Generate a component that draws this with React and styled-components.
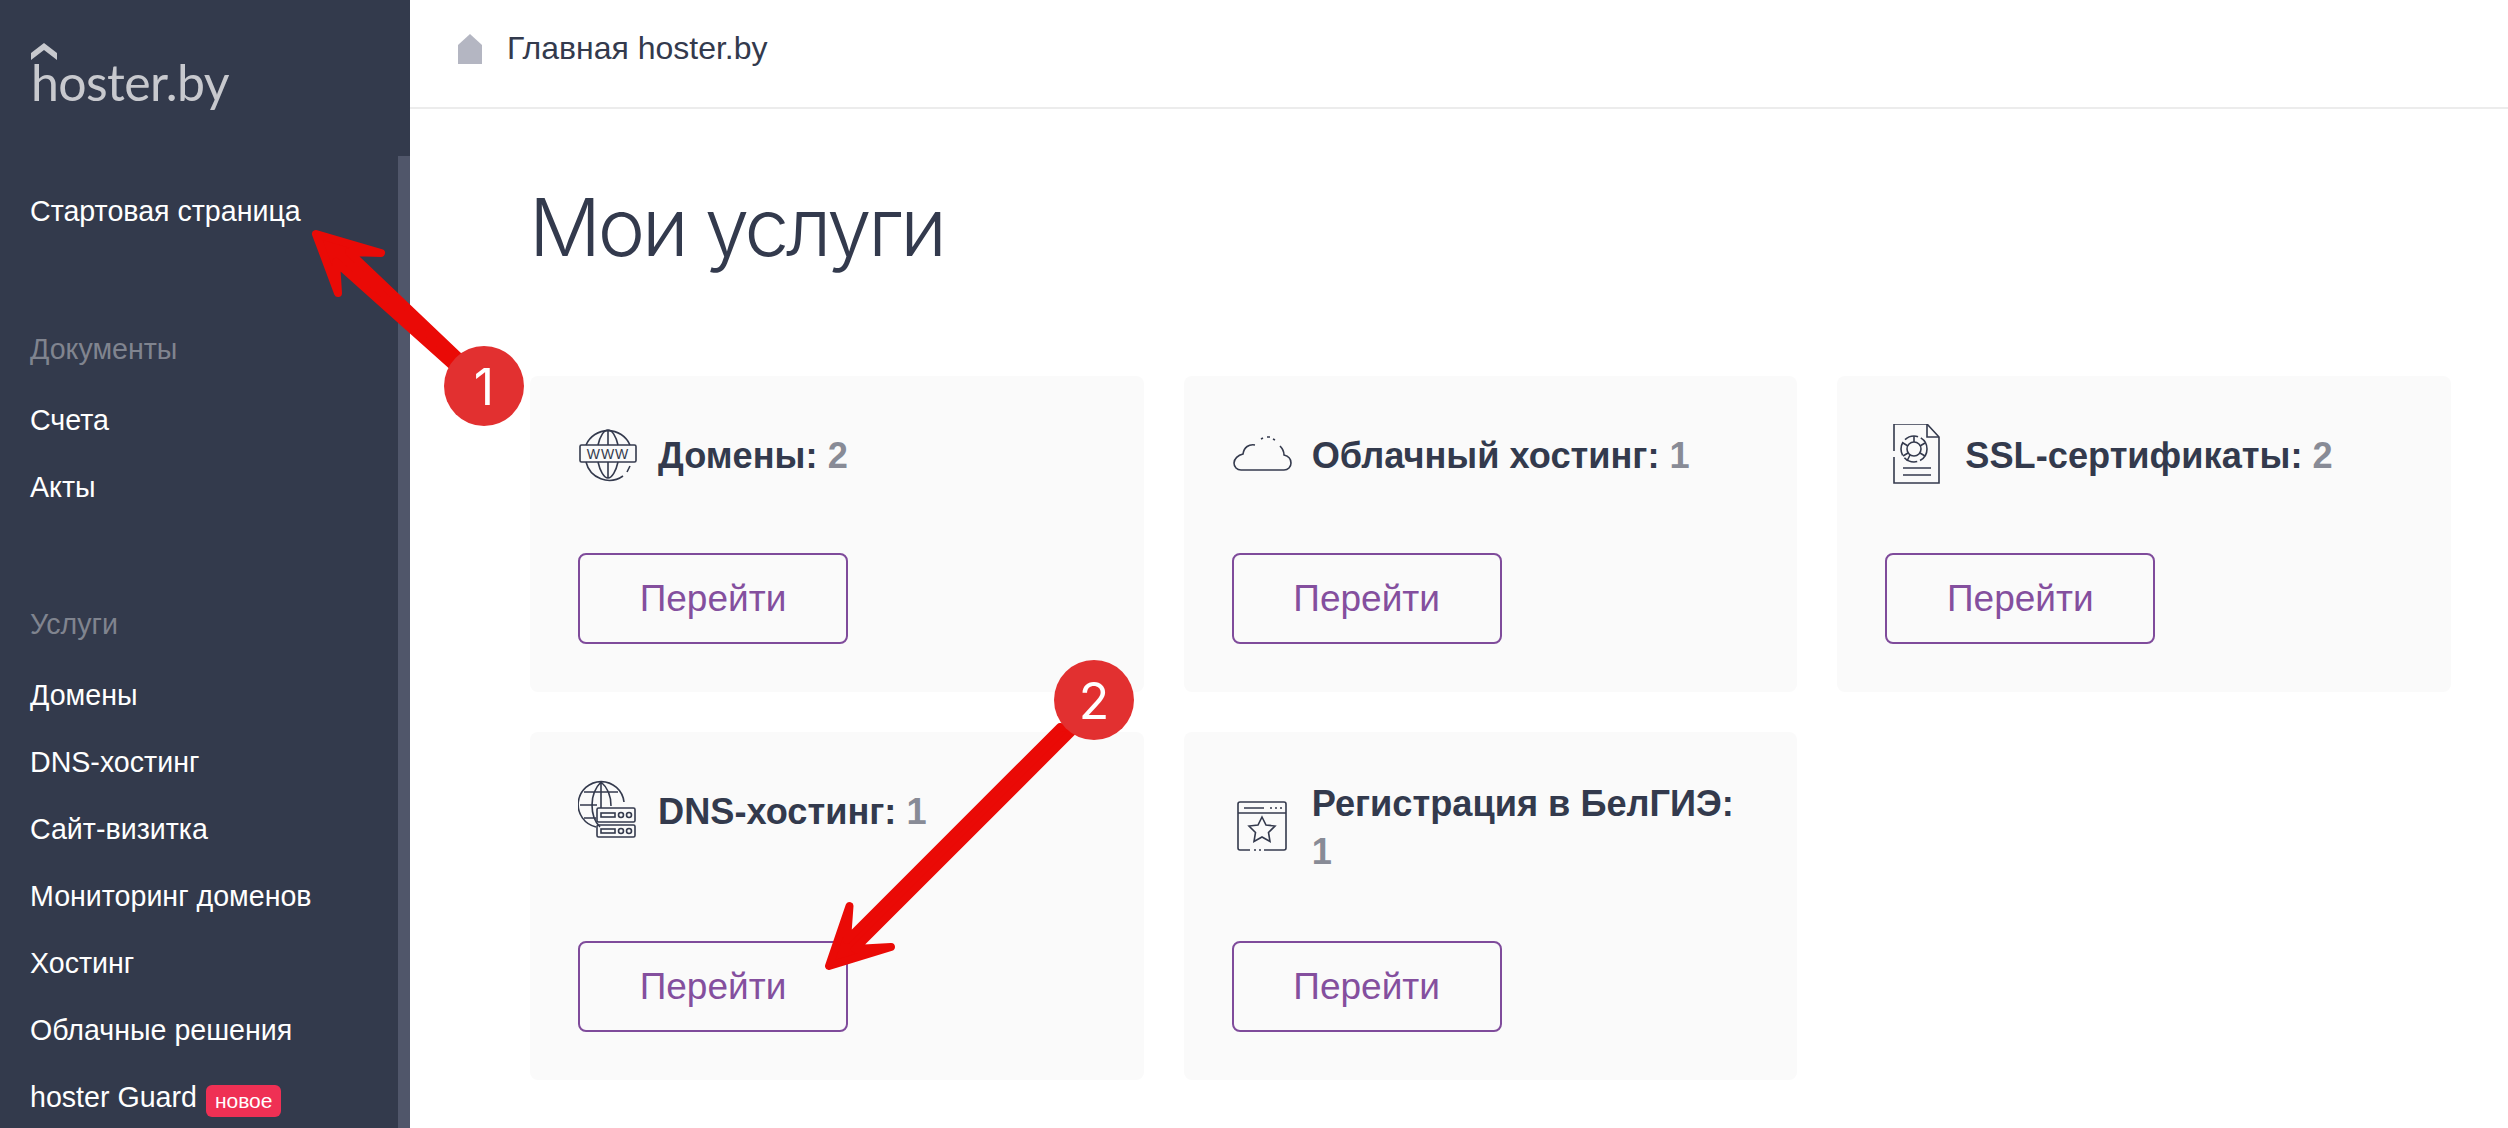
import React from "react";
import styled, { createGlobalStyle } from "styled-components";

const GlobalStyle = createGlobalStyle`
  html, body {
    margin: 0;
    padding: 0;
    background: #fff;
  }
  body {
    font-family: "Liberation Sans", Arial, sans-serif;
    color: #333a4d;
    overflow: hidden;
  }
`;

const Page = styled.div`
  position: relative;
  display: flex;
  width: 2508px;
  height: 1128px;
  overflow: hidden;
`;

const Sidebar = styled.aside`
  position: relative;
  flex: 0 0 410px;
  height: 1128px;
  background: #333a4c;
  overflow: hidden;
`;

const ScrollThumb = styled.div`
  position: absolute;
  top: 156px;
  right: 0;
  bottom: 0;
  width: 12px;
  background: #50566a;
`;

const LogoBox = styled.div`
  position: relative;
  height: 178px;
  padding-left: 31px;
`;

const LogoMark = styled.svg`
  position: absolute;
  left: 30px;
  top: 42px;
`;

const LogoText = styled.div`
  padding-top: 52px;
  font-family: Lato, "Liberation Sans", sans-serif;
  font-size: 50px;
  line-height: 60px;
  font-weight: 400;
  letter-spacing: -0.6px;
  color: #c8c9ce;
`;

const Nav = styled.nav`
  display: flex;
  flex-direction: column;
  padding-left: 30px;
`;

const NavItem = styled.a`
  display: flex;
  align-items: center;
  height: 67px;
  font-size: 28.6px;
  color: #fff;
`;

const NavHeading = styled(NavItem)`
  margin-top: ${(p) => p.$gap}px;
  margin-bottom: 4px;
  color: #80848f;
`;

const Badge = styled.span`
  display: inline-block;
  margin-left: 9px;
  margin-top: 6px;
  padding: 0 9px;
  height: 32px;
  line-height: 31px;
  border-radius: 6px;
  background: #ef3054;
  color: #fff;
  font-size: 21px;
`;

const Main = styled.main`
  flex: 1;
  min-width: 0;
`;

const TopBar = styled.header`
  display: flex;
  align-items: center;
  gap: 25px;
  height: 97px;
  padding: 0 0 10px 48px;
  border-bottom: 2px solid #ececec;
  font-size: 32px;
`;

const Content = styled.div`
  padding: 68px 57px 0 120px;
`;

const Title = styled.h1`
  margin: 0 0 99px -1px;
  height: 100px;
  font-family: Inter, "Liberation Sans", sans-serif;
  font-weight: 300;
  font-size: 80px;
  line-height: 100px;
  letter-spacing: -3.2px;
  color: #333a4d;
`;

const Grid = styled.div`
  display: grid;
  grid-template-columns: repeat(3, 1fr);
  gap: 40px;
`;

const Card = styled.section`
  display: flex;
  flex-direction: column;
  padding: 48px;
  border-radius: 8px;
  background: #fafafa;
`;

const CardHead = styled.div`
  display: flex;
  align-items: center;
  gap: 16px;
  min-height: 64px;
  margin-bottom: 65px;
`;

const CardTitle = styled.h3`
  margin: 0;
  font-size: 36.2px;
  line-height: 48px;
  font-weight: 700;
  color: #333a4d;
`;

const Count = styled.span`
  color: #888b96;
`;

const GoButton = styled.a`
  display: flex;
  align-items: center;
  justify-content: center;
  width: 270px;
  height: 91px;
  margin-top: auto;
  box-sizing: border-box;
  border: 2px solid #7f4b9b;
  border-radius: 8px;
  font-size: 37px;
  color: #844f9e;
`;

const IconSvg = styled.svg`
  flex: 0 0 64px;
  fill: none;
  stroke: #343a4d;
  stroke-width: 1.6;
`;

const IconLabel = styled.text`
  font-family: "Liberation Sans", sans-serif;
  font-size: 14px;
  letter-spacing: 1px;
  fill: #343a4d;
  stroke: none;
`;

const Overlay = styled.svg`
  position: absolute;
  left: 0;
  top: 0;
  pointer-events: none;
`;

const MarkerNumber = styled.text`
  font-family: Inter, "Liberation Sans", sans-serif;
  font-size: 50px;
  font-weight: 400;
  fill: #fff;
  text-anchor: middle;
`;

const WwwIcon = () => (
  <IconSvg width="64" height="64" viewBox="0 0 64 64">
    <path d="M8 21a24 24 0 0 1 44 0M8 38a24 24 0 0 0 37 14M49 48l3-6" />
    <path d="M20 21c2-9 6-15 10-15s8 6 10 15M20 38c2 9 6 16 10 16s8-7 10-16M30 6v15M30 38v16" />
    <rect x="2" y="21" width="56" height="17" rx="1.5" />
    <IconLabel x="30" y="35" textAnchor="middle">
      WWW
    </IconLabel>
  </IconSvg>
);

const CloudIcon = () => (
  <IconSvg width="64" height="64" viewBox="0 0 64 64">
    <path d="M23 21c-6-1-11 2-12 9-5 1-9 5-9 9 0 4 3 7 7 7h43c4 0 7-3 7-7 0-4-3-7-7-8 0-3-1-6-4-9" />
    <path d="M29 15l2-1M35 13h3M41 15l2 1" />
  </IconSvg>
);

const SslIcon = () => (
  <IconSvg width="64" height="64" viewBox="0 0 64 64">
    <path d="M9 27V0h33l12 13v46H9V33M9 21v-2" />
    <path d="M42 0v13h12" />
    <circle cx="29" cy="25" r="7" />
    <circle cx="29" cy="25" r="13" strokeDasharray="14 3" />
    <path d="M29 12v6M40 19l-5 3M40 32l-5-3M22 37l3-6M18 32l5-3M18 19l5 3" />
    <path d="M18 44h28M18 51h28" />
  </IconSvg>
);

const DnsIcon = () => (
  <IconSvg width="64" height="64" viewBox="0 0 64 64">
    <path d="M18 47a23 23 0 1 1 28-25" />
    <path d="M23 2c-7 7-9 15-9 23s2 16 8 22M23 2c6 5 10 13 10 24M23 2v26M2 25h17M6 12h34M6 38h12" />
    <rect x="19" y="28" width="38" height="14" rx="1.5" />
    <rect x="19" y="45" width="38" height="12" rx="1.5" />
    <rect x="23" y="33" width="14" height="4" />
    <rect x="23" y="49" width="14" height="4" />
    <circle cx="43" cy="35" r="2.5" />
    <circle cx="51" cy="35" r="2.5" />
    <circle cx="43" cy="51" r="2.5" />
    <circle cx="51" cy="51" r="2.5" />
  </IconSvg>
);

const StarIcon = () => (
  <IconSvg width="64" height="64" viewBox="0 0 64 64">
    <path d="M18 54H8a2 2 0 0 1-2-2V8a2 2 0 0 1 2-2h44a2 2 0 0 1 2 2v44a2 2 0 0 1-2 2H32M22 54h2M27 54h2" />
    <path d="M6 17h48M12 12h20M38 12h2M43 12h2M48 12h2" />
    <path d="M30 21l4 8 9 1-6.500 6.500 1.500 9-8-4.500-8 4.500 1.500-9L17 30l9-1z" />
  </IconSvg>
);

const cards = [
  { title: "Домены", count: 2, Icon: WwwIcon },
  { title: "Облачный хостинг", count: 1, Icon: CloudIcon },
  { title: "SSL-сертификаты", count: 2, Icon: SslIcon },
  { title: "DNS-хостинг", count: 1, Icon: DnsIcon },
  { title: "Регистрация в БелГИЭ", count: 1, Icon: StarIcon },
];

const services = [
  "Домены",
  "DNS-хостинг",
  "Сайт-визитка",
  "Мониторинг доменов",
  "Хостинг",
  "Облачные решения",
];

export default function App() {
  return (
    <>
      <GlobalStyle />
      <Page>
        <Sidebar>
          <ScrollThumb />
          <LogoBox>
            <LogoMark width="30" height="20" viewBox="0 0 30 20">
              <path d="M1 11L14 1l13 10v7L14 8 1 18z" fill="#c8c9ce" />
            </LogoMark>
            <LogoText>hoster.by</LogoText>
          </LogoBox>
          <Nav>
            <NavItem>Стартовая страница</NavItem>
            <NavHeading $gap={71}>Документы</NavHeading>
            <NavItem>Счета</NavItem>
            <NavItem>Акты</NavItem>
            <NavHeading $gap={70}>Услуги</NavHeading>
            {services.map((s) => (
              <NavItem key={s}>{s}</NavItem>
            ))}
            <NavItem>
              hoster Guard<Badge>новое</Badge>
            </NavItem>
          </Nav>
        </Sidebar>
        <Main>
          <TopBar>
            <svg width="24" height="30" viewBox="0 0 24 30">
              <path d="M12 0l12 11v19H0V11z" fill="#b4b6c2" />
            </svg>
            Главная hoster.by
          </TopBar>
          <Content>
            <Title>Мои услуги</Title>
            <Grid>
              {cards.map(({ title, count, Icon }) => (
                <Card key={title}>
                  <CardHead>
                    <Icon />
                    <CardTitle>
                      {title}: <Count>{count}</Count>
                    </CardTitle>
                  </CardHead>
                  <GoButton>Перейти</GoButton>
                </Card>
              ))}
            </Grid>
          </Content>
        </Main>
        <Overlay width="2508" height="1128" viewBox="0 0 2508 1128">
          <path
            d="M316 234L381 253L349 252L475 372L468 380L336 262L338 293Z"
            fill="#ea0a06"
            stroke="#ea0a06"
            strokeWidth="8"
            strokeLinejoin="round"
          />
          <circle cx="484" cy="386" r="40" fill="#e23030" />
          <MarkerNumber x="484" y="405">
            1
          </MarkerNumber>
          <path
            d="M829 966L849.500 906L847 940L1060 727L1075 729L855 949L891 947Z"
            fill="#ea0a06"
            stroke="#ea0a06"
            strokeWidth="8"
            strokeLinejoin="round"
          />
          <circle cx="1094" cy="700" r="40" fill="#e23030" />
          <MarkerNumber x="1094" y="719">
            2
          </MarkerNumber>
        </Overlay>
      </Page>
    </>
  );
}
